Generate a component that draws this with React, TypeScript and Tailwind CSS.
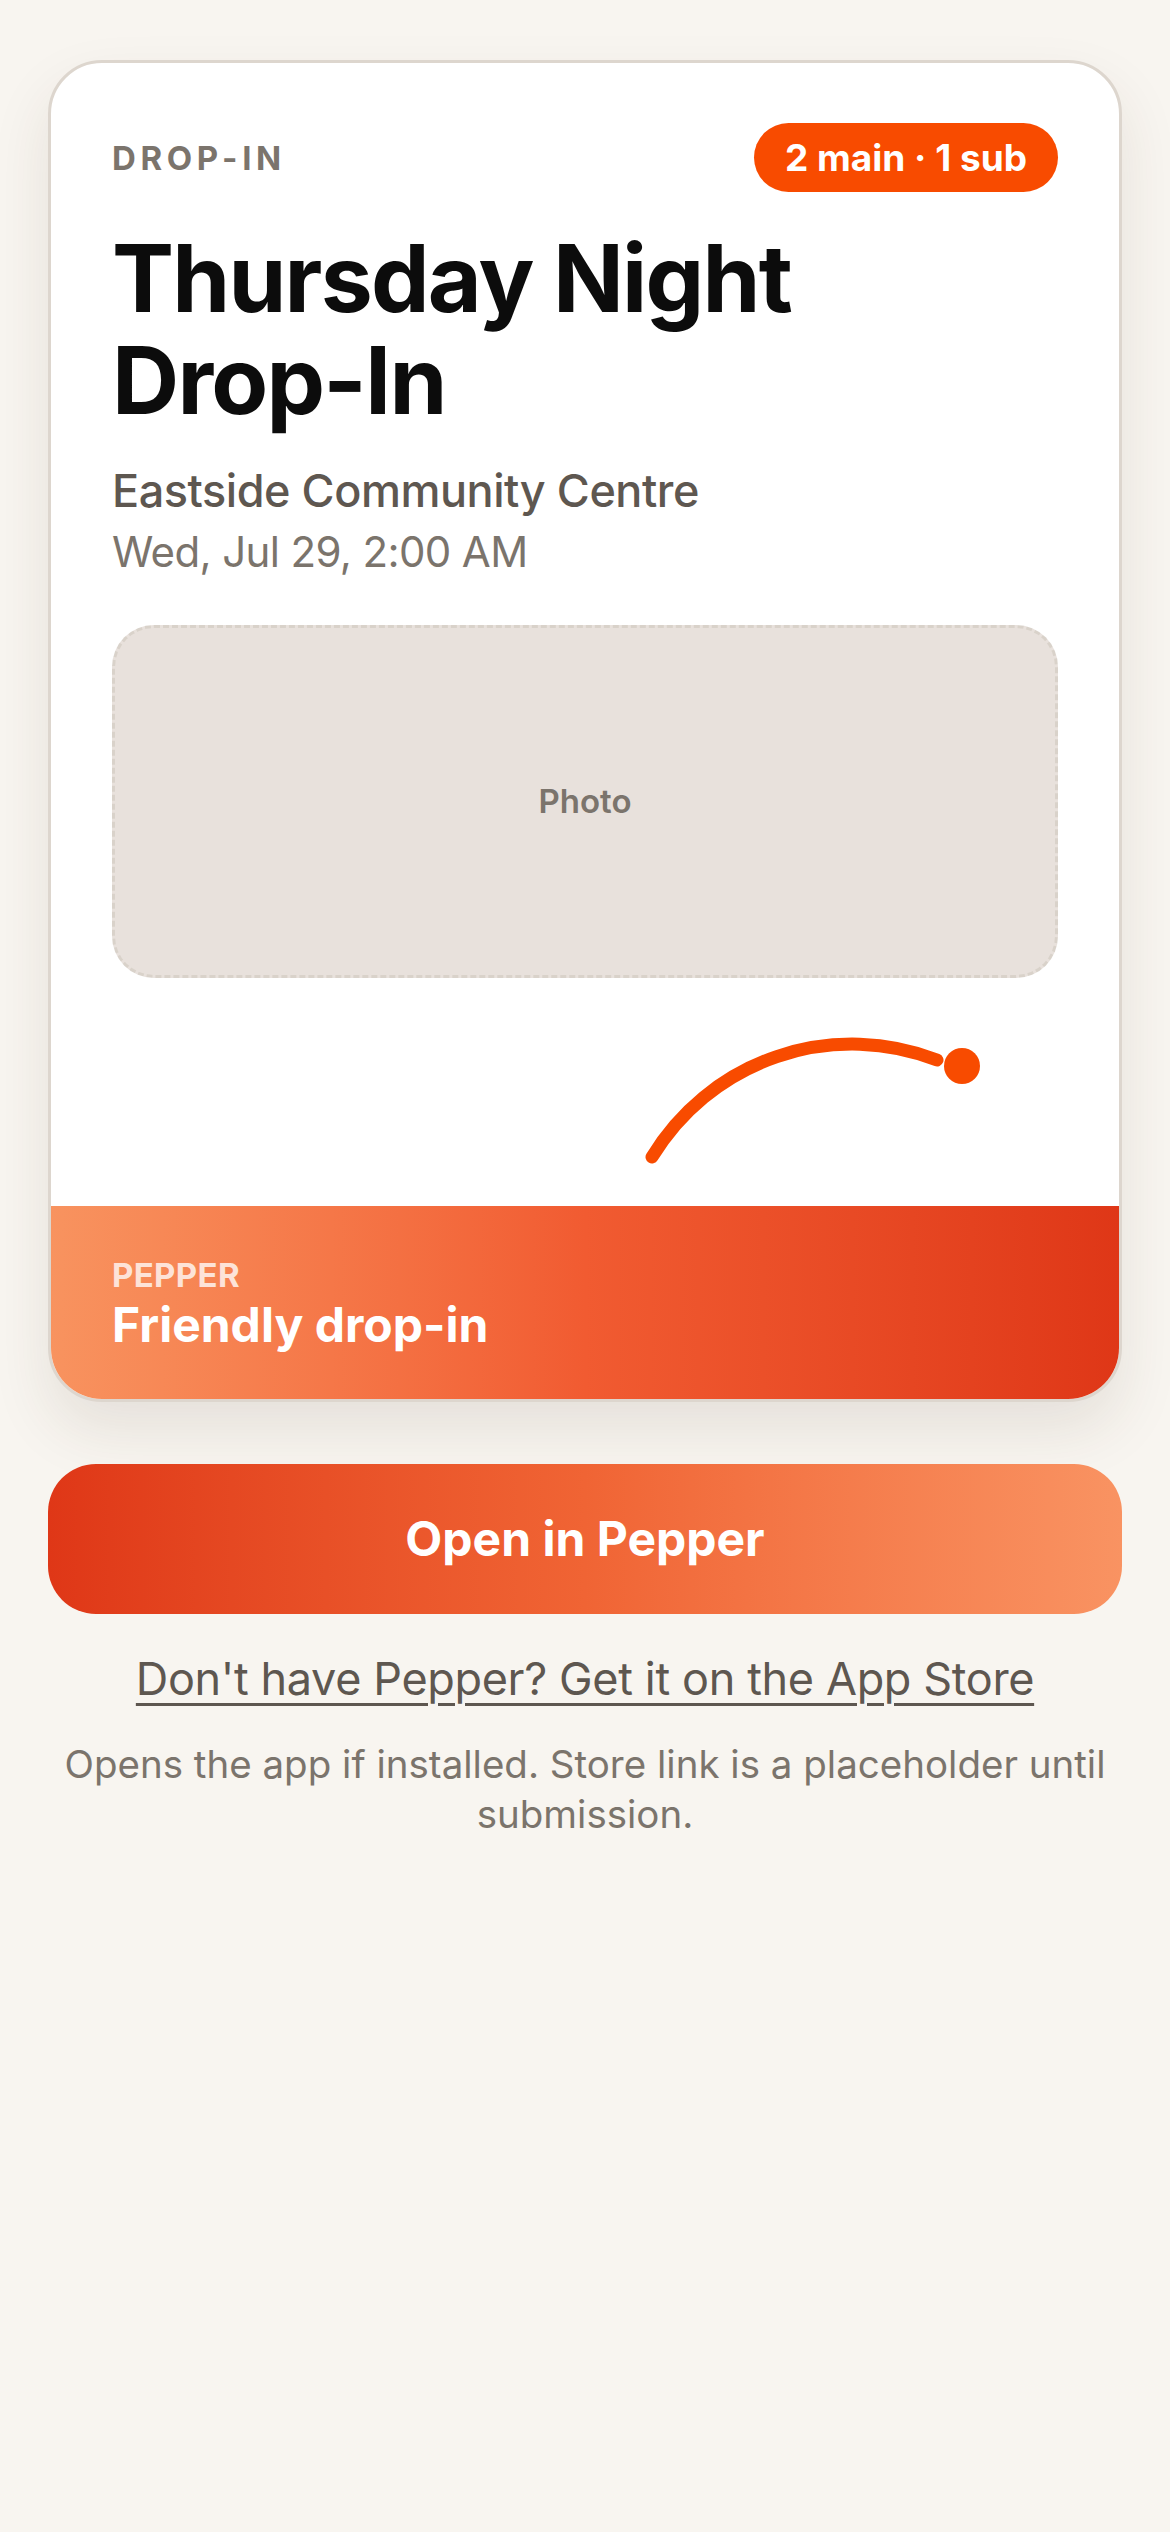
import React from 'react';

const font = { fontFamily: 'Inter, "Noto Sans", "Liberation Sans", sans-serif' };

const EventCard: React.FC = () => {
  return (
    <div className="rounded-[54px] border-[3px] border-[#ddd6ce] bg-white overflow-hidden shadow-[0_28px_60px_rgba(70,50,30,0.10)]">
      <div className="px-[61px] pt-[60px]">
        {/* Header: type + counts */}
        <div className="flex items-center justify-between">
          <span className="text-[33px] font-bold tracking-[0.14em] text-[#7b746c] leading-[40px]">DROP-IN</span>
          <span className="h-[69px] px-[31px] rounded-full bg-[#f84b00] text-white text-[37px] font-bold leading-[69px]">
            2 main · 1 sub
          </span>
        </div>

        <h1 className="mt-[35px] text-[93px] font-bold leading-[102px] tracking-[-0.019em] text-[#0c0c0c]">
          Thursday Night
          <br />
          Drop-In
        </h1>

        <div className="mt-[32px] text-[45px] font-medium leading-[56px] tracking-[-0.01em] text-[#5e5750]">
          Eastside Community Centre
        </div>
        <div className="mt-[5px] text-[42px] leading-[56px] tracking-[-0.015em] text-[#7b746c]">Wed, Jul 29, 2:00 AM</div>

        {/* Photo placeholder */}
        <div className="mt-[45px] h-[353px] rounded-[42px] border-[3px] border-dashed border-[#d9d2ca] bg-[#e8e1dc] flex items-center justify-center">
          <span className="text-[33px] font-semibold text-[#7b746c]">Photo</span>
        </div>

        {/* Stem flourish */}
        <svg className="block" width="100%" height="228" viewBox="0 0 946 228" preserveAspectRatio="xMinYMin meet">
          <path d="M540 179 A 234 234 0 0 1 825 82" fill="none" stroke="#f84b00" strokeWidth="13" strokeLinecap="round" />
          <circle cx="850" cy="88" r="18" fill="#f84b00" />
        </svg>
      </div>

      {/* Footer band */}
      <div className="bg-gradient-to-r from-[#f8935f] via-[#f15b31] to-[#df3717] px-[61px] pt-[49px] pb-[46px]">
        <div className="text-[33px] font-bold leading-[40px] tracking-[0.01em] text-[#fde3d8]">PEPPER</div>
        <div className="mt-[2px] text-[48px] font-bold leading-[56px] text-white">Friendly drop-in</div>
      </div>
    </div>
  );
};

const App: React.FC = () => {
  return (
    <div className="min-h-screen bg-[#f8f5f0]" style={font}>
      <div className="px-[48px] pt-[60px] pb-[80px]">
        <EventCard />

        <button className="mt-[62px] w-full h-[150px] rounded-[48px] bg-gradient-to-r from-[#df3717] via-[#f06434] to-[#f99362] text-white text-[48px] font-bold">
          Open in Pepper
        </button>

        <div className="mt-[37px] text-center">
          <a
            href="#"
            className="text-[45px] leading-[56px] tracking-[-0.008em] text-[#5e5750] underline underline-offset-[8px] decoration-[3px]"
          >
            Don't have Pepper? Get it on the App Store
          </a>
        </div>

        <p className="mt-[32px] text-center text-[38.5px] leading-[50px] text-[#7b746c]">
          Opens the app if installed. Store link is a placeholder until submission.
        </p>
      </div>
    </div>
  );
};

export default App;
